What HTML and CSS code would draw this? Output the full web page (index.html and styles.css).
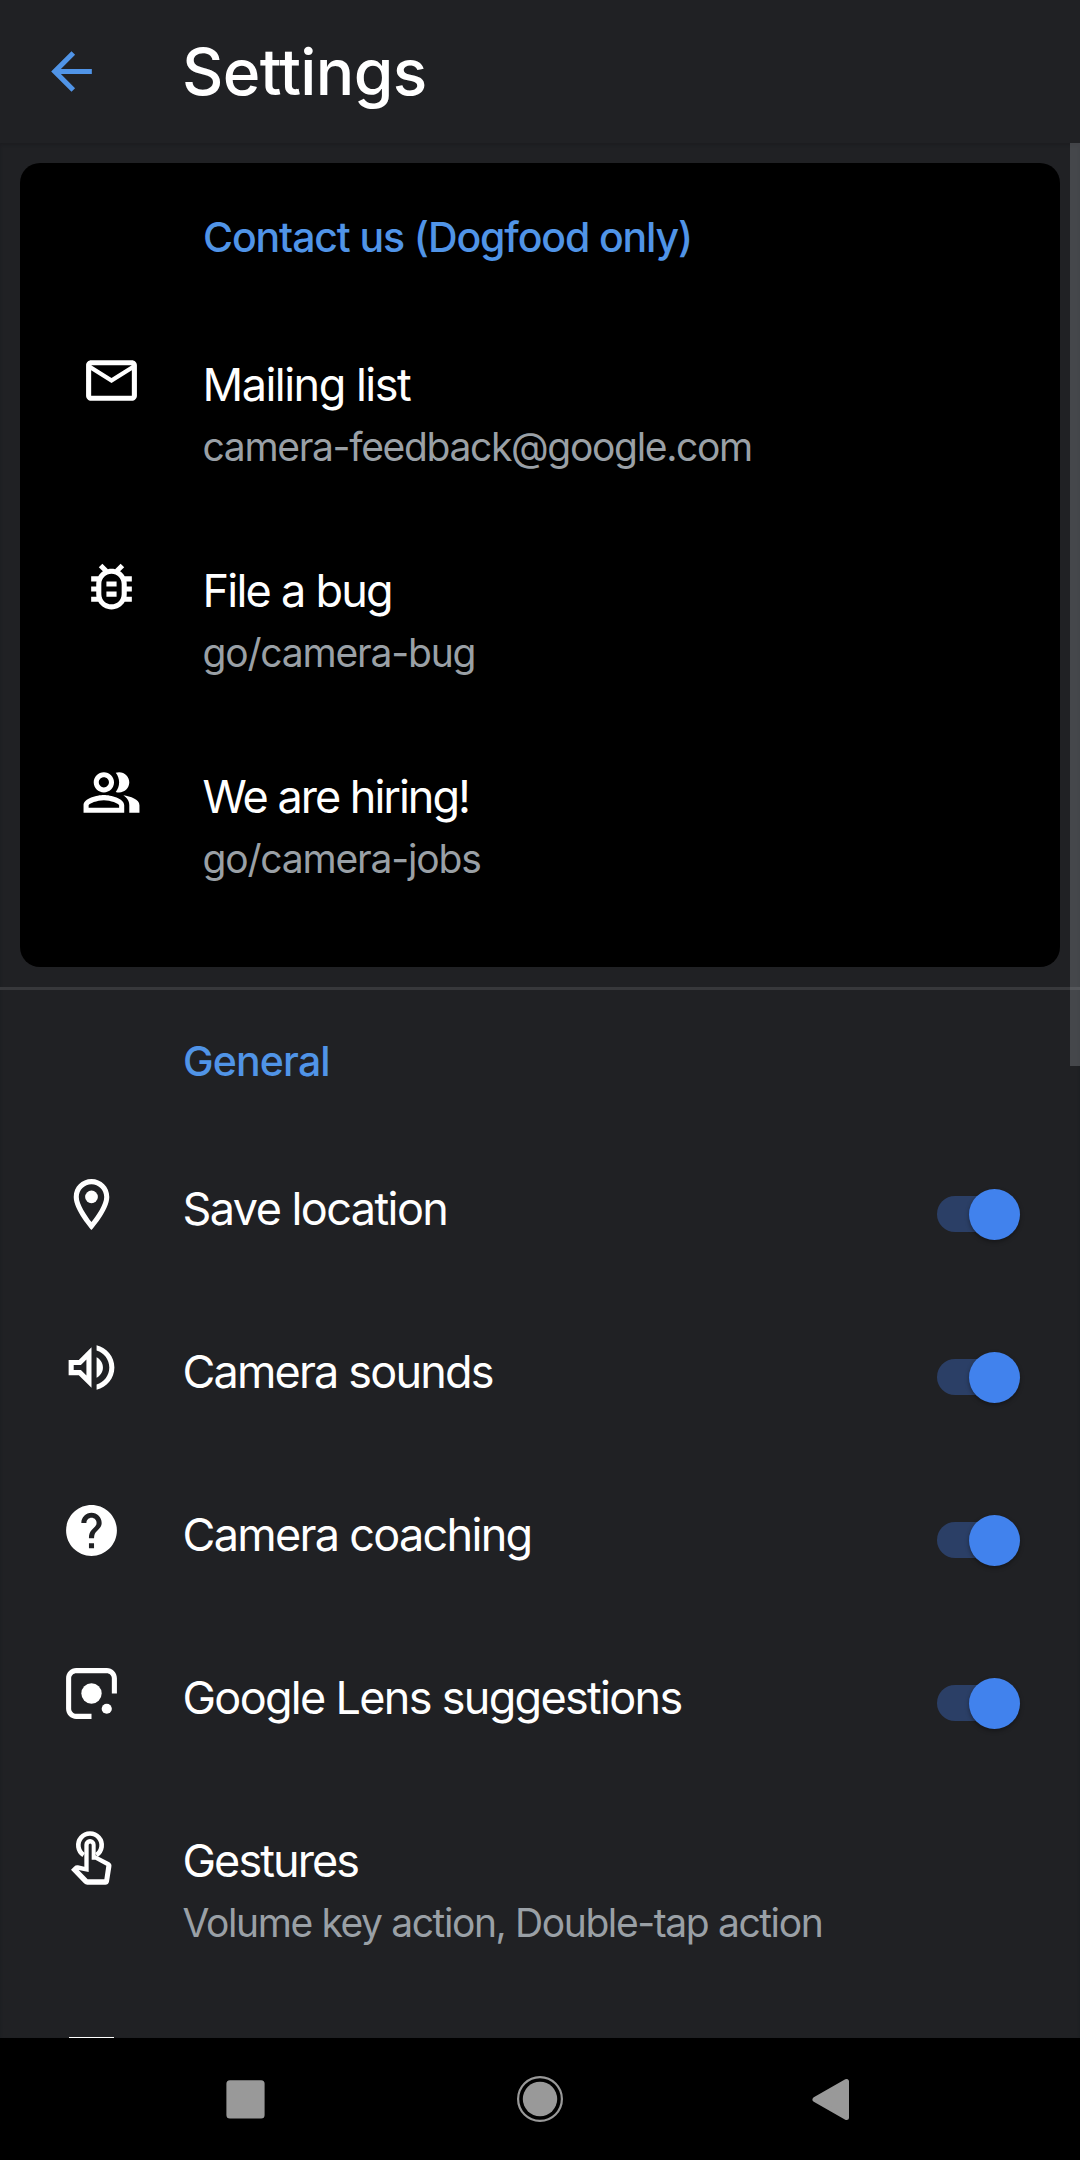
FILE: index.html
```html
<!DOCTYPE html>
<html lang="en">
<head>
<meta charset="utf-8">
<title>Settings</title>
<link rel="stylesheet" href="styles.css">
</head>
<body>
<div class="screen">
  <header class="app-bar">
    <svg class="back" viewBox="0 0 24 24"><path d="M20 11H7.83l5.59-5.59L12 4l-8 8 8 8 1.41-1.41L7.83 13H20v-2z"/></svg>
    <h1 class="app-title">Settings</h1>
  </header>

  <main class="content">
    <section class="card">
      <h2 class="section-title contact-title">Contact us (Dogfood only)</h2>
      <div class="row row-tall">
        <svg class="icon" viewBox="0 0 24 24"><path d="M22 6c0-1.1-.9-2-2-2H4c-1.1 0-2 .9-2 2v12c0 1.1.9 2 2 2h16c1.1 0 2-.9 2-2V6zm-2 0l-8 5-8-5h16zm0 12H4V8l8 5 8-5v10z"/></svg>
        <div class="text"><div class="label l-mail">Mailing list</div><div class="sub s-mail">camera-feedback@google.com</div></div>
      </div>
      <div class="row row-tall">
        <svg class="icon" viewBox="0 0 24 24"><path d="M20 8h-2.81c-.45-.78-1.07-1.45-1.82-1.96L17 4.41 15.59 3l-2.17 2.17C12.96 5.06 12.49 5 12 5s-.96.06-1.41.17L8.41 3 7 4.41l1.62 1.63C7.88 6.55 7.26 7.22 6.81 8H4v2h2.09c-.05.33-.09.66-.09 1v1H4v2h2v1c0 .34.04.67.09 1H4v2h2.81c1.04 1.79 2.97 3 5.19 3s4.15-1.21 5.19-3H20v-2h-2.09c.05-.33.09-.66.09-1v-1h2v-2h-2v-1c0-.34-.04-.67-.09-1H20V8zm-4 7c0 2.21-1.79 4-4 4s-4-1.79-4-4v-4c0-2.21 1.79-4 4-4s4 1.79 4 4v4zm-6-1h4v2h-4zm0-4h4v2h-4z"/></svg>
        <div class="text"><div class="label l-bug">File a bug</div><div class="sub s-go">go/camera-bug</div></div>
      </div>
      <div class="row row-tall">
        <svg class="icon" viewBox="0 0 24 24"><path d="M16.67 13.13C18.04 14.06 19 15.32 19 17v3h4v-3c0-2.18-3.57-3.47-6.33-3.87zM15 12c2.21 0 4-1.79 4-4s-1.79-4-4-4c-.47 0-.91.1-1.33.24C14.5 5.27 15 6.58 15 8s-.5 2.73-1.33 3.76c.42.14.86.24 1.33.24zM9 12c2.21 0 4-1.79 4-4s-1.79-4-4-4-4 1.79-4 4 1.79 4 4 4zm0-6c1.1 0 2 .9 2 2s-.9 2-2 2-2-.9-2-2 .9-2 2-2zM9 13c-2.67 0-8 1.34-8 4v3h16v-3c0-2.66-5.33-4-8-4zm6 5H3v-.99C3.2 16.29 6.3 15 9 15s5.8 1.29 6 2v1z"/></svg>
        <div class="text"><div class="label l-hire">We are hiring!</div><div class="sub s-go">go/camera-jobs</div></div>
      </div>
    </section>

    <section class="general">
      <h2 class="section-title general-title">General</h2>
      <div class="row">
        <svg class="icon" viewBox="0 0 24 24"><path d="M12 2C8.13 2 5 5.13 5 9c0 5.25 7 13 7 13s7-7.75 7-13c0-3.87-3.13-7-7-7zM7 9c0-2.76 2.24-5 5-5s5 2.24 5 5c0 2.88-2.88 7.19-5 9.88C9.92 16.21 7 11.85 7 9z"/><circle cx="12" cy="9" r="2.5"/></svg>
        <div class="text"><div class="label l-save">Save location</div></div>
        <div class="switch"><div class="thumb"></div></div>
      </div>
      <div class="row">
        <svg class="icon" viewBox="0 0 24 24"><path d="M3 9v6h4l5 5V4L7 9H3zm7-.17v6.34L7.83 13H5v-2h2.83L10 8.83zM16.5 12c0-1.77-1.02-3.29-2.5-4.03v8.05c1.48-.73 2.5-2.25 2.5-4.02zM14 3.23v2.06c2.89.86 5 3.54 5 6.71s-2.11 5.85-5 6.71v2.06c4.01-.91 7-4.49 7-8.77s-2.99-7.86-7-8.77z"/></svg>
        <div class="text"><div class="label l-sounds">Camera sounds</div></div>
        <div class="switch"><div class="thumb"></div></div>
      </div>
      <div class="row">
        <svg class="icon" viewBox="0 0 24 24"><path d="M12 2C6.48 2 2 6.48 2 12s4.48 10 10 10 10-4.48 10-10S17.52 2 12 2zm1 17h-2v-2h2v2zm2.07-7.75l-.9.92C13.45 12.9 13 13.5 13 15h-2v-.5c0-1.1.45-2.1 1.17-2.83l1.24-1.26c.37-.36.59-.86.59-1.41 0-1.1-.9-2-2-2s-2 .9-2 2H8c0-2.21 1.79-4 4-4s4 1.79 4 4c0 .88-.36 1.68-.93 2.25z"/></svg>
        <div class="text"><div class="label l-coach">Camera coaching</div></div>
        <div class="switch"><div class="thumb"></div></div>
      </div>
      <div class="row">
        <svg class="icon" viewBox="0 0 24 24"><path d="M12 22H6c-2.2 0-4-1.8-4-4V6c0-2.2 1.8-4 4-4h12c2.2 0 4 1.8 4 4v6h-2V6c0-1.1-.9-2-2-2H6c-1.1 0-2 .9-2 2v12c0 1.1.9 2 2 2h6z"/><circle cx="12" cy="12" r="4"/><circle cx="18" cy="18" r="2"/></svg>
        <div class="text"><div class="label l-lens">Google Lens suggestions</div></div>
        <div class="switch"><div class="thumb"></div></div>
      </div>
      <div class="row row-tall">
        <svg class="icon" viewBox="33 33 183 183"><path class="touch-ring" d="M101 120A35 35 0 1 1 139 120"/><path fill-rule="evenodd" d="M103 89a17 17 0 0 1 34 0V121L178 142Q186 147 184 156L177 200Q175 209 166 209H112Q106 209 102 205L63 164 72 155Q77 150 84 151L103 155ZM116 90V171L86 165 113 193H163L169 152 136 134H125V90a4.500 4.500 0 0 0-9 0Z"/></svg>
        <div class="text"><div class="label l-gest">Gestures</div><div class="sub s-gest">Volume key action, Double-tap action</div></div>
      </div>
      <div class="row">
        <div class="icon box-icon"></div>
      </div>
    </section>
    <div class="scrollbar"></div>
  </main>

  <nav class="nav-bar">
    <svg class="nav-icons" viewBox="0 0 1080 122">
      <rect x="226.400" y="42.200" width="38.200" height="38.200" rx="3.500"/>
      <circle cx="540" cy="61" r="17.200"/>
      <circle class="ring" cx="540" cy="61" r="21.900"/>
      <path class="nav-back" d="M815 61.500 846.500 43.500v36z"/>
    </svg>
  </nav>
</div>
</body>
</html>
```
FILE: styles.css
```css
* { box-sizing: border-box; }
body { margin: 0; background: #202124; font-family: Inter, "Noto Sans", sans-serif; color: #fff; }
h1, h2 { margin: 0; }
svg { display: block; fill: currentColor; }
.screen { display: flex; flex-direction: column; width: 1080px; height: 2160px; overflow: hidden; background: #202124; }
.app-bar { display: flex; align-items: center; height: 143px; flex: none; padding-left: 41px; }
.back { width: 61px; height: 61px; color: #5094e7; }
.app-title { margin-left: 80px; font-size: 64px; font-weight: 500; line-height: 80px; letter-spacing: -0.6px; }
.content { position: relative; flex: 1; min-height: 0; overflow: hidden; padding-top: 20px; box-shadow: inset 0 2px 3px #1c1d20; }
.card { height: 804px; margin: 0 20px; padding: 49px 0 0 61px; border-radius: 20px; background: #000; }
.section-title { height: 50px; font-size: 41px; font-weight: 500; line-height: 50px; color: #5094e7; padding-left: 122px; white-space: nowrap; }
.contact-title { margin-bottom: 87px; letter-spacing: -1.13px; }
.general-title { margin-bottom: 87px; letter-spacing: -0.85px; }
.row { display: flex; align-items: flex-start; height: 163px; padding-right: 60px; }
.row-tall { height: 206px; }
.icon { width: 61px; height: 61px; flex: none; margin: 1px 60.5px 0 0; }
.text { flex: 1; padding-top: 9px; white-space: nowrap; }
.label { font-size: 45px; line-height: 54px; letter-spacing: -1.7px; }
.l-mail { letter-spacing: -1.5px; }
.l-bug { letter-spacing: -1.75px; }
.l-hire { letter-spacing: -2px; }
.l-save { letter-spacing: -1.57px; }
.l-sounds { letter-spacing: -1.83px; }
.l-gest { letter-spacing: -1.95px; }
.sub { margin-top: 11px; font-size: 39px; line-height: 48px; color: #9aa0a6; }
.s-mail { letter-spacing: -1.33px; }
.s-go { letter-spacing: -1.18px; }
.s-gest { letter-spacing: -1.4px; }
.general { margin-top: 20px; border-top: 3px solid #37383b; padding: 46px 0 0 61px; }
.switch { display: flex; align-items: center; justify-content: flex-end; flex: none; width: 65px; height: 36px; margin: 23px 18px 0 0; border-radius: 18px; background: #2b3f66; }
.thumb { width: 51px; height: 51px; flex: none; margin-right: -18px; border-radius: 50%; background: #4182ed; box-shadow: 0 2px 4px rgba(0,0,0,.35); }
.touch-ring { fill: none; stroke: currentColor; stroke-width: 14; }
.box-icon { width: 45px; height: 46px; margin: 6px 0 0 8px; background: #fff; }
.scrollbar { position: absolute; top: 0; right: 0; width: 10px; height: 923px; background: rgba(154,160,166,.3); }
.nav-bar { height: 122px; flex: none; background: #000; color: #999; }
.nav-icons { width: 1080px; height: 122px; }
.ring { fill: none; stroke: #999; stroke-width: 2.2; }
.nav-back { stroke: #999; stroke-width: 5; stroke-linejoin: round; }
```
